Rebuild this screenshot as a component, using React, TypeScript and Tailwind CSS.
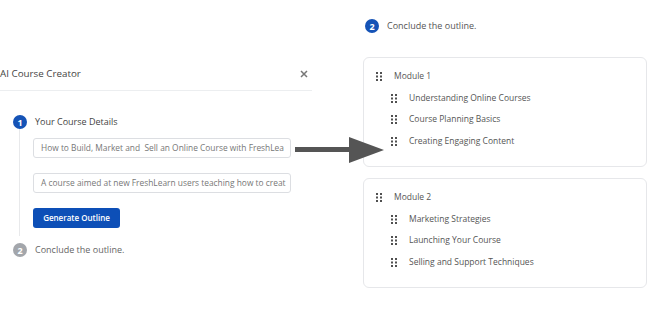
import React from "react";

function Grip({ className = "" }: { className?: string }) {
  return (
    <svg width="6" height="9" viewBox="0 0 6 9" className={className}>
      {[0, 1].map((c) =>
        [0, 1, 2].map((r) => (
          <rect key={`${c}-${r}`} x={c * 4} y={r * 3.5} width="2" height="2" fill="#505050" />
        ))
      )}
    </svg>
  );
}

function Step({ n, active }: { n: number; active: boolean }) {
  return (
    <div
      className={`w-[14px] h-[14px] rounded-full flex items-center justify-center text-white text-[9px] font-bold leading-none ${
        active ? "bg-[#1553b6]" : "bg-[#a3a6ab]"
      }`}
    >
      {n}
    </div>
  );
}

function Card({ title, items }: { title: string; items: string[] }) {
  return (
    <div className="h-[110px] border border-[#e6e7ea] rounded-[6px] pt-[8px] pl-[12px] text-[8.5px]">
      <div className="h-[21.5px] flex items-center">
        <Grip className="mr-[12px]" />
        <span>{title}</span>
      </div>
      {items.map((it) => (
        <div key={it} className="h-[21.5px] flex items-center pl-[15px]">
          <Grip className="mr-[12px]" />
          <span>{it}</span>
        </div>
      ))}
    </div>
  );
}

export default function App() {
  return (
    <div
      className="relative w-[650px] h-[322px] bg-white overflow-hidden text-[9px] text-[#555]"
      style={{ fontFamily: '"Open Sans", sans-serif' }}
    >
      <div className="flex">
        {/* Left panel */}
        <div className="w-[312px] pt-[57px]">
          <div className="h-[34px] flex items-center justify-between border-b border-[#eceef0] pr-[3px] pt-[1px]">
            <span className="text-[9.8px] text-[#444]">AI Course Creator</span>
            <svg width="8" height="8" viewBox="0 0 8 8" className="mr-[1px]">
              <path d="M1 1L7 7M7 1L1 7" stroke="#777" strokeWidth="1.5" />
            </svg>
          </div>
          <div className="pl-[13px] pt-[24px]">
            <div className="flex items-center h-[14px]">
              <Step n={1} active />
              <span className="ml-[8px] text-[9px] text-[#444]">Your Course Details</span>
            </div>
            <div className="ml-[6px] border-l border-[#e8e9eb] pl-[13px] pt-[9px] pb-[8px] flex flex-col">
              <div className="w-[258px] h-[20px] border border-[#dcdee2] rounded-[3px] flex items-center px-[7px] text-[8.4px] text-[#777] whitespace-nowrap overflow-hidden">
                How to Build, Market and&nbsp; Sell an Online Course with FreshLea
              </div>
              <div className="mt-[15px] w-[258px] h-[20px] border border-[#dcdee2] rounded-[3px] flex items-center px-[7px] text-[8.4px] text-[#777] whitespace-nowrap overflow-hidden">
                A course aimed at new FreshLearn users teaching how to creat
              </div>
              <div className="mt-[15px] w-[87px] h-[20px] bg-[#0d4fb7] rounded-[3px] flex items-center justify-center text-white text-[8px] font-semibold">
                Generate Outline
              </div>
            </div>
            <div className="flex items-center h-[14px] mt-[7px]">
              <Step n={2} active={false} />
              <span className="ml-[8px] text-[9px] text-[#666]">Conclude the outline.</span>
            </div>
          </div>
        </div>

        {/* Right panel */}
        <div className="ml-[51px] w-[284px] pt-[19px]">
          <div className="flex items-center h-[14px] ml-[2px]">
            <Step n={2} active />
            <span className="ml-[8px] text-[9px] text-[#555]">Conclude the outline.</span>
          </div>
          <div className="mt-[24px] flex flex-col gap-[11px]">
            <Card
              title="Module 1"
              items={["Understanding Online Courses", "Course Planning Basics", "Creating Engaging Content"]}
            />
            <Card
              title="Module 2"
              items={["Marketing Strategies", "Launching Your Course", "Selling and Support Techniques"]}
            />
          </div>
        </div>
      </div>

      {/* Arrow overlay */}
      <svg className="absolute left-[295px] top-[134px]" width="90" height="32" viewBox="0 0 90 32">
        <rect x="0" y="13" width="56" height="5" fill="#555" />
        <polygon points="54,3 89,16 54,29" fill="#555" />
      </svg>
    </div>
  );
}
